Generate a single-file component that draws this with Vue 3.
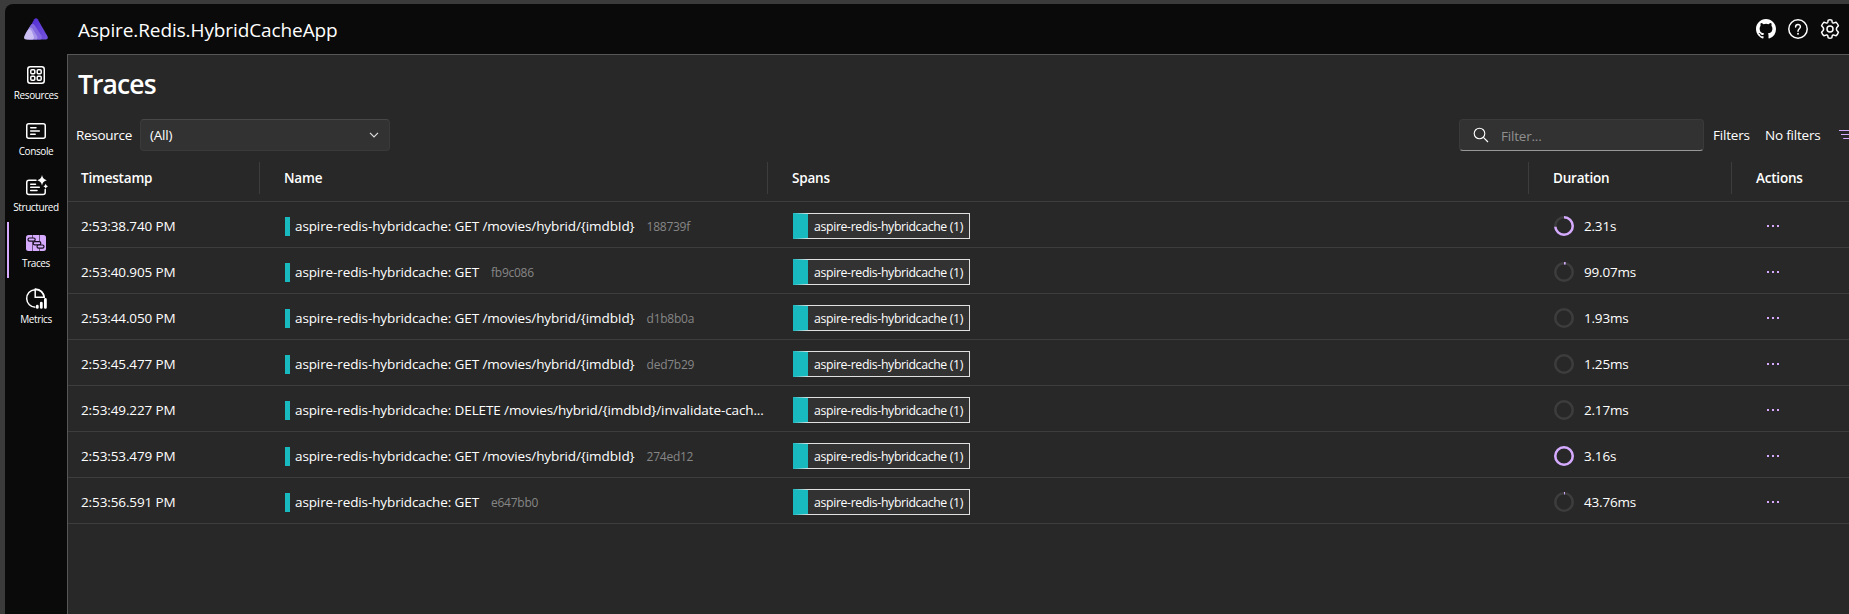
<script setup>
const nav = [
  { id: 'resources', label: 'Resources' },
  { id: 'console', label: 'Console' },
  { id: 'structured', label: 'Structured' },
  { id: 'traces', label: 'Traces', active: true },
  { id: 'metrics', label: 'Metrics' },
]
const C = 2 * Math.PI * 8.75
const app = 'aspire-redis-hybridcache'
const rows = [
  { time: '2:53:38.740 PM', name: 'GET /movies/hybrid/{imdbId}', hash: '188739f', duration: '2.31s', part: 0.731 },
  { time: '2:53:40.905 PM', name: 'GET', hash: 'fb9c086', duration: '99.07ms', part: 0.031 },
  { time: '2:53:44.050 PM', name: 'GET /movies/hybrid/{imdbId}', hash: 'd1b8b0a', duration: '1.93ms', part: 0 },
  { time: '2:53:45.477 PM', name: 'GET /movies/hybrid/{imdbId}', hash: 'ded7b29', duration: '1.25ms', part: 0 },
  { time: '2:53:49.227 PM', name: 'DELETE /movies/hybrid/{imdbId}/invalidate-cach...', hash: '', duration: '2.17ms', part: 0 },
  { time: '2:53:53.479 PM', name: 'GET /movies/hybrid/{imdbId}', hash: '274ed12', duration: '3.16s', part: 1 },
  { time: '2:53:56.591 PM', name: 'GET', hash: 'e647bb0', duration: '43.76ms', part: 0.018 },
]
</script>

<template>
  <div class="frame">
    <div class="shell">
      <header class="top">
        <div class="logo">
          <svg width="24" height="22" viewBox="0 0 24 22">
            <defs>
              <linearGradient id="ga" x1="0" y1="0" x2="1" y2="1"><stop offset="0" stop-color="#512bd4" /><stop offset="1" stop-color="#7455dd" /></linearGradient>
            </defs>
            <path d="M10.3 1.2Q12 -.8 13.7 1.2L23.6 18.6Q24.4 21.4 22 21.6H12L6 9Z" fill="url(#ga)" />
            <path d="M6.2 7.8Q8.4 3.8 10.8 7.4L17.4 17.6Q18.8 21.2 16.4 21.6H5L3 14Z" fill="#8468df" />
            <path d="M5.4 9.2Q7.4 8.8 8.8 11L13.2 18.2Q14.2 21.2 12 21.6H3L1.5 16Z" fill="#a491ea" />
            <path d="M2.8 13.4Q5.4 9 7.8 13.2L9.8 18.2Q10.4 21.2 8.4 21.6H2Q-.8 21.2 .4 18Z" fill="#cbbff3" />
          </svg>
        </div>
        <h1>Aspire.Redis.HybridCacheApp</h1>
        <div class="tools">
          <svg width="20" height="20" viewBox="0 0 16 16"><path fill="#fff" d="M8 0C3.58 0 0 3.58 0 8c0 3.54 2.29 6.53 5.47 7.59.4.07.55-.17.55-.38 0-.19-.01-.82-.01-1.49-2.01.37-2.53-.49-2.69-.94-.09-.23-.48-.94-.82-1.13-.28-.15-.68-.52-.01-.53.63-.01 1.08.58 1.23.82.72 1.21 1.87.87 2.33.66.07-.52.28-.87.51-1.07-1.78-.2-3.64-.89-3.64-3.95 0-.87.31-1.59.82-2.15-.08-.2-.36-1.02.08-2.12 0 0 .67-.21 2.2.82a7.65 7.65 0 0 1 4 0c1.53-1.04 2.2-.82 2.2-.82.44 1.1.16 1.92.08 2.12.51.56.82 1.27.82 2.15 0 3.07-1.87 3.75-3.65 3.95.29.25.54.73.54 1.48 0 1.07-.01 1.93-.01 2.2 0 .21.15.46.55.38A8.01 8.01 0 0 0 16 8c0-4.42-3.58-8-8-8Z" /></svg>
          <svg width="20" height="20" viewBox="0 0 20 20" fill="none" stroke="#fff" stroke-width="1.5"><circle cx="10" cy="10" r="9.2" /><path d="M7.6 8C7.6 4.6 12.4 4.7 12.4 7.8C12.4 9.7 10 9.9 10 12.2" stroke-linecap="round" /><circle cx="10" cy="14.7" r=".95" fill="#fff" stroke="none" /></svg>
          <svg width="20" height="20" viewBox="0 0 20 20" fill="none" stroke="#fff" stroke-width="1.5" stroke-linejoin="round"><circle cx="10" cy="10" r="3" /><path d="M8.2 1.1Q10 .6 11.8 1.1L12.2 3.2Q12.6 4.2 13.9 3.9L16.1 3.2Q17.8 4.9 18.4 6.8L16.9 8.5Q15.9 10 16.9 11.5L18.4 13.2Q17.8 15.1 16.1 16.8L13.9 16.1Q12.6 15.8 12.2 16.8L11.8 18.9Q10 19.4 8.2 18.9L7.8 16.8Q7.4 15.8 6.1 16.1L3.9 16.8Q2.2 15.1 1.6 13.2L3.1 11.5Q4.1 10 3.1 8.5L1.6 6.8Q2.2 4.9 3.9 3.2L6.1 3.9Q7.4 4.2 7.8 3.2Z" /></svg>
        </div>
      </header>
      <div class="body">
        <nav>
          <a v-for="n in nav" :key="n.id" :class="{ active: n.active }">
            <svg width="24" height="24" viewBox="0 0 24 24" fill="none" stroke="#fff" stroke-width="1.5">
              <g v-if="n.id === 'resources'"><rect x="3.75" y="3.75" width="16.5" height="16.5" rx="2.5" /><rect x="6.8" y="6.8" width="4" height="4" rx="1" /><rect x="13.2" y="6.8" width="4" height="4" rx="1" /><rect x="6.8" y="13.2" width="4" height="4" rx="1" /><rect x="13.2" y="13.2" width="4" height="4" rx="1" /></g>
              <g v-else-if="n.id === 'console'" stroke-linecap="round"><rect x="2.75" y="4.75" width="18.5" height="14.5" rx="2" /><path d="M6.7 8.8H12M6.7 12H15.3M6.7 15.2H11.2" /></g>
              <g v-else-if="n.id === 'structured'" stroke-linecap="round"><path d="M12 5.2H5Q2.75 5.2 2.75 7.4V17.4Q2.75 19.4 5 19.4H19Q21.2 19.4 21.2 17.4V14.4" /><path d="M6.7 9.2H11.5M6.7 12.3H15.3M6.7 15.4H13" /><path d="M18 0Q18.8 4.2 22.8 5.2Q18.8 6.2 18 10.4Q17.2 6.2 13.2 5.2Q17.2 4.2 18 0ZM21.7 8.8Q22.2 10.8 24 11.3Q22.2 11.8 21.7 13.8Q21.2 11.8 19.4 11.3Q21.2 10.8 21.7 8.8Z" fill="#fff" stroke="none" /></g>
              <g v-else-if="n.id === 'traces'"><rect x="2" y="4" width="20" height="16" rx="2.5" fill="#d5aaff" stroke="none" /><path d="M8.5 4V8M8.5 10V20M15.5 4V10M15.5 17V20" stroke="#4b3a5c" stroke-width=".8" /><g stroke="#17101f" stroke-width="1.2" fill="#d5aaff"><rect x="4" y="7" width="7.2" height="3.2" rx="1.6" /><rect x="9.2" y="10.6" width="7.6" height="3.2" rx="1.6" /><rect x="13" y="14" width="7" height="3.2" rx="1.6" /></g></g>
              <g v-else><path d="M11.4 20.2A8.8 8.8 0 1 1 20.2 10.2H11.2V1.6" /><path d="M11.2 2A8.8 8.8 0 0 1 20.2 11" /><path d="M13.3 19.2V20.4M17.3 16.2V20.4M21.4 12.5V20.4" stroke-width="2.8" stroke-linecap="round" /></g>
            </svg>
            <span>{{ n.label }}</span>
          </a>
        </nav>
        <main>
          <h2>Traces</h2>
          <div class="bar">
            <label>Resource</label>
            <div class="select"><span>(All)</span><svg width="10" height="6" viewBox="0 0 10 6" fill="none" stroke="#ddd" stroke-width="1.2"><path d="M1 .8L5 4.8L9 .8" /></svg></div>
            <div class="search">
              <svg width="16" height="16" viewBox="0 0 16 16" fill="none" stroke="#fff" stroke-width="1.1"><circle cx="6.5" cy="6.5" r="5.3" /><path d="M10.4 10.4L15 15" /></svg>
              <span>Filter...</span>
            </div>
            <span class="flabel">Filters</span>
            <span class="nof">No filters</span>
            <svg class="ficon" width="20" height="20" viewBox="0 0 20 20" stroke="#d5aaff" stroke-width="1.1"><path d="M1 5.5H17M3 9.5H15M5.2 13.5H12" /></svg>
          </div>
          <div class="grid">
            <div class="row head"><div>Timestamp</div><div>Name</div><div>Spans</div><div>Duration</div><div>Actions</div></div>
            <div v-for="r in rows" :key="r.time" class="row">
              <div class="time">{{ r.time }}</div>
              <div class="name"><i></i><span>{{ app }}: {{ r.name }}</span><span v-if="r.hash" class="hash">{{ r.hash }}</span></div>
              <div><span class="badge">{{ app }} (1)</span></div>
              <div class="dur">
                <svg width="20" height="20" viewBox="0 0 20 20" fill="none" stroke-width="2.5"><circle cx="10" cy="10" r="8.75" stroke="#3d3d3d" /><circle v-if="r.part" cx="10" cy="10" r="8.75" stroke="#d5aaff" :stroke-dasharray="`${C * r.part} ${C}`" transform="rotate(-90 10 10)" /></svg>
                <span>{{ r.duration }}</span>
              </div>
              <div class="act"><b></b><b></b><b></b></div>
            </div>
          </div>
        </main>
      </div>
    </div>
  </div>
</template>

<style>
body { margin: 0; background: #3b3b3b; overflow: hidden; }
</style>
<style scoped>
.frame { box-sizing: border-box; width: 1849px; height: 614px; padding: 4px 0 0 5px; background: #3b3b3b; overflow: hidden; color: #fff; font-family: "Open Sans", "Noto Sans", sans-serif; font-size: 13.5px; line-height: 20px; letter-spacing: -0.2px; white-space: nowrap; }
.shell { height: 610px; background: #0a0a0a; border-top-left-radius: 8px; display: flex; flex-direction: column; }
.top { height: 50px; display: flex; align-items: center; flex: none; }
.logo { width: 62px; display: flex; justify-content: center; }
.logo svg { display: block; margin-top: -1px; }
h1 { margin: 2px 0 0 11px; font-size: 19px; font-weight: 400; letter-spacing: -0.1px; line-height: 28px; flex: 1; }
.tools { display: flex; gap: 12px; margin-right: 9px; }
.tools svg { display: block; }
.body { flex: 1; display: flex; min-height: 0; }
nav { width: 62px; flex: none; }
nav a { box-sizing: border-box; height: 56px; display: flex; flex-direction: column; align-items: center; padding-top: 9px; font-size: 10px; line-height: 14px; letter-spacing: -0.4px; }
nav a span { margin-top: 1px; }
nav a.active { border-left: 2px solid #d5aaff; margin-left: 2px; padding-right: 4px; }
nav svg { display: block; flex: none; overflow: visible; }
main { box-sizing: border-box; width: 1782px; border: solid #575757; border-width: 1px 0 0 1px; background: #282828; overflow: hidden; }
h2 { margin: 11px 0 0 10px; height: 38px; font-size: 26.5px; line-height: 37px; font-weight: 600; letter-spacing: -0.9px; }
.bar { display: flex; align-items: center; height: 32px; margin-top: 15px; padding-left: 8px; width: 1800px; box-sizing: border-box; }
.bar > * { flex: none; }
label { width: 64px; letter-spacing: -0.3px; }
.select, .search { box-sizing: border-box; height: 32px; border-radius: 4px; background: #323232; border: 1px solid #3a3a3a; display: flex; align-items: center; }
.select { width: 250px; padding: 0 10px 0 9px; justify-content: space-between; border-top-color: #484848; }
.search { width: 245px; margin-left: 1069px; border-bottom-color: #999; padding-left: 13px; color: #8f8f8f; }
.search span { margin: 2px 0 0 12px; }
.flabel { margin-left: 9px; width: 52px; }
.nof { width: 73px; }
.grid { width: 1781px; }
.row { box-sizing: border-box; height: 46px; display: grid; grid-template-columns: 192px 508px 761px 203px 117px; border-bottom: 1px solid #3d3d3d; padding-top: 3px; letter-spacing: -0.11px; }
.row > div { display: flex; align-items: center; padding-left: 24px; min-width: 0; }
.row > div:first-child { padding-left: 13px; }
.head { height: 51px; font-weight: 600; font-size: 13.5px; align-items: center; padding-top: 4px; letter-spacing: -0.2px; }
.head > div { box-sizing: border-box; height: 32px; border-right: 1px solid #3d3d3d; }
.head > div:last-child { border-right: 0; }
.name i { width: 5px; height: 19px; background: #18b9bf; margin: 0 5px 0 1px; flex: none; }
.hash { color: #868686; font-size: 12px; letter-spacing: -0.25px; margin: 1px 0 0 12px; }
.badge { box-sizing: border-box; width: 177px; height: 26px; margin-left: 1px; border: 1px solid #e0e0e0; border-left: 15px solid #18b9bf; background: #323232; padding-left: 6px; font-size: 12.3px; letter-spacing: -0.36px; line-height: 26px; display: block; }
.dur span { margin-left: 10px; letter-spacing: -0.2px; }
.dur svg { margin-left: 1px; }
.row > .act { gap: 3px; padding-left: 35px; }
.act b { width: 2px; height: 2px; background: #d5aaff; }
</style>
